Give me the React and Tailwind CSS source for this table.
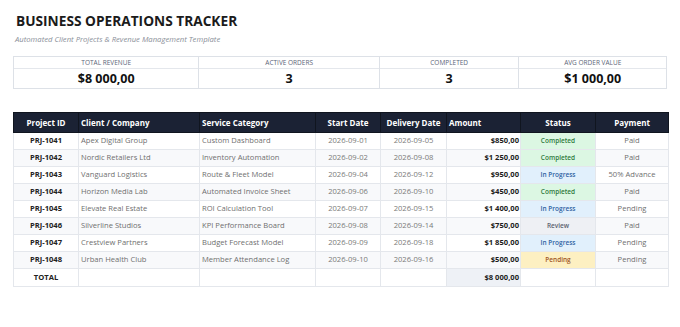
import React from "react";

const kpis = [
  { label: "Total Revenue", value: "$8 000,00", w: "w-[186px]" },
  { label: "Active Orders", value: "3", w: "w-[181px]" },
  { label: "Completed", value: "3", w: "w-[140px]" },
  { label: "Avg Order Value", value: "$1 000,00", w: "w-[148px]" },
];

const rows = [
  ["PRJ-1041", "Apex Digital Group", "Custom Dashboard", "2026-09-01", "2026-09-05", "$850,00", "Completed", "Paid"],
  ["PRJ-1042", "Nordic Retailers Ltd", "Inventory Automation", "2026-09-02", "2026-09-08", "$1 250,00", "Completed", "Paid"],
  ["PRJ-1043", "Vanguard Logistics", "Route & Fleet Model", "2026-09-04", "2026-09-12", "$950,00", "In Progress", "50% Advance"],
  ["PRJ-1044", "Horizon Media Lab", "Automated Invoice Sheet", "2026-09-06", "2026-09-10", "$450,00", "Completed", "Paid"],
  ["PRJ-1045", "Elevate Real Estate", "ROI Calculation Tool", "2026-09-07", "2026-09-15", "$1 400,00", "In Progress", "Pending"],
  ["PRJ-1046", "Silverline Studios", "KPI Performance Board", "2026-09-08", "2026-09-14", "$750,00", "Review", "Paid"],
  ["PRJ-1047", "Crestview Partners", "Budget Forecast Model", "2026-09-09", "2026-09-18", "$1 850,00", "In Progress", "Pending"],
  ["PRJ-1048", "Urban Health Club", "Member Attendance Log", "2026-09-10", "2026-09-16", "$500,00", "Pending", "Pending"],
];

const statusStyle = {
  Completed: "bg-[#dcf7e3] text-[#2f7a3e]",
  "In Progress": "bg-[#e1f0fc] text-[#2f62a3]",
  Review: "bg-[#eef0f4] text-[#5b6170]",
  Pending: "bg-[#fdf0c2] text-[#a0561f]",
};

const cell = "border border-[#e4e7ec] px-[2px] h-[17px]";

export default function App() {
  return (
    <div
      className="w-[680px] h-[327px] bg-white px-[13px] pt-[11px]"
      style={{ fontFamily: '"Open Sans", "Liberation Sans", sans-serif' }}
    >
      {/* header */}
      <h1 className="pl-[3px] text-[13.7px] leading-[20px] font-bold text-[#1b1b1b]">
        BUSINESS OPERATIONS TRACKER
      </h1>
      <p className="pl-[2px] mt-[3px] text-[7.7px] leading-[10px] italic text-[#8a8f99]">
        Automated Client Projects &amp; Revenue Management Template
      </p>

      {/* kpi strip */}
      <div className="mt-[12px] flex border-t border-l border-[#dde1e7]">
        {kpis.map((k) => (
          <div key={k.label} className={`${k.w} border-r border-b border-[#dde1e7]`}>
            <div className="h-[12px] border-b border-[#e4e7ec] text-center text-[6.5px] leading-[11px] uppercase text-[#5d6679]">
              {k.label}
            </div>
            <div className="h-[19px] text-center text-[12.5px] leading-[19px] font-bold text-[#111]">
              {k.value}
            </div>
          </div>
        ))}
      </div>

      {/* projects table */}
      <table className="mt-[23px] w-[655px] table-fixed border-collapse text-[7.6px] leading-none">
        <colgroup>
          <col className="w-[65px]" />
          <col className="w-[121px]" />
          <col className="w-[116px]" />
          <col className="w-[65px]" />
          <col className="w-[66px]" />
          <col className="w-[74px]" />
          <col className="w-[75px]" />
          <col className="w-[73px]" />
        </colgroup>
        <thead>
          <tr className="bg-[#1b2234] text-white text-[8px] font-bold">
            <th className="h-[20px] border border-[#10151f] text-center">Project ID</th>
            <th className="border border-[#10151f] text-left px-[2px]">Client / Company</th>
            <th className="border border-[#10151f] text-left px-[2px]">Service Category</th>
            <th className="border border-[#10151f] text-center">Start Date</th>
            <th className="border border-[#10151f] text-center">Delivery Date</th>
            <th className="border border-[#10151f] text-left px-[2px]">Amount</th>
            <th className="border border-[#10151f] text-center">Status</th>
            <th className="border border-[#10151f] text-center">Payment</th>
          </tr>
        </thead>
        <tbody>
          {rows.map((r, i) => (
            <tr key={r[0]} className={i % 2 === 1 ? "bg-[#f8f9fb]" : "bg-white"}>
              <td className={`${cell} text-center font-bold text-[#222]`}>{r[0]}</td>
              <td className={`${cell} text-[#6f6f6f]`}>{r[1]}</td>
              <td className={`${cell} text-[#6f6f6f]`}>{r[2]}</td>
              <td className={`${cell} text-center text-[#7a7a7a]`}>{r[3]}</td>
              <td className={`${cell} text-center text-[#7a7a7a]`}>{r[4]}</td>
              <td className={`${cell} text-right font-bold text-[#1c1c1c] pr-[1px]`}>{r[5]}</td>
              <td className={`${cell} text-center font-semibold text-[6.5px] ${statusStyle[r[6]]}`}>
                {r[6]}
              </td>
              <td className={`${cell} text-center text-[#6f6f6f]`}>{r[7]}</td>
            </tr>
          ))}
          <tr className="bg-white">
            <td className={`${cell} h-[18px] text-center font-bold text-[#222]`}>TOTAL</td>
            <td className={cell}></td>
            <td className={cell}></td>
            <td className={cell}></td>
            <td className={cell}></td>
            <td className={`${cell} text-right font-bold text-[#1c1c1c] pr-[1px] bg-[#eef1f6]`}>
              $8 000,00
            </td>
            <td className={cell}></td>
            <td className={cell}></td>
          </tr>
        </tbody>
      </table>
    </div>
  );
}
